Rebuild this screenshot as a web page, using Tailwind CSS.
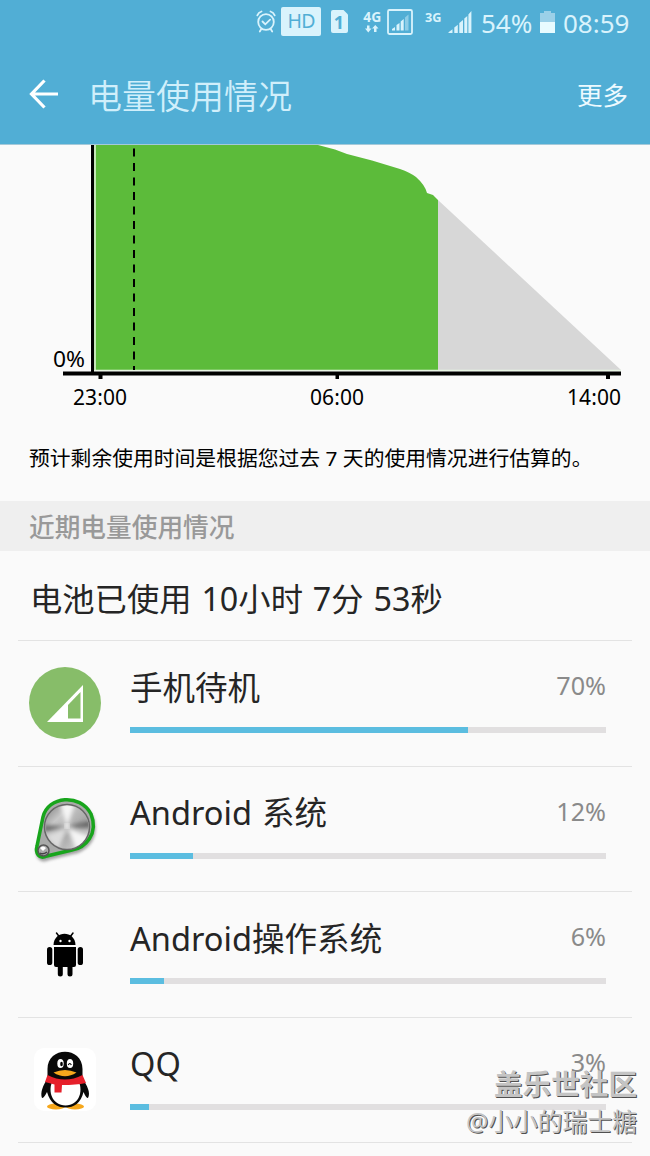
<!DOCTYPE html>
<html lang="zh-CN">
<head>
    <meta charset="UTF-8">
    <meta name="viewport" content="width=device-width, initial-scale=1.0">
    <title>电量使用情况</title>

    <!-- Styles -->
    <script src="https://cdn.jsdelivr.net/npm/@tailwindcss/browser@4"></script>
</head>
<body class="bg-[#fafafa] font-['Noto_Sans','Noto_Sans_CJK_SC',sans-serif] text-[#252525]">
<div class="relative w-[650px] h-[1156px] overflow-hidden">

    <!-- Header -->
    <header class="h-[145px] bg-[#51aed5] border-b border-[#a5c9d9] flex flex-col">
        <!-- Status bar -->
        <div class="h-[46px] flex items-center text-[#d9f3fc]">
            <svg class="w-[216px] h-[46px] ml-[256px] shrink-0" viewBox="256 0 216 46" fill="none">
                <!-- Alarm -->
                <g stroke="currentColor" stroke-width="1.8" stroke-linecap="round">
                    <circle cx="266" cy="22" r="7.8"/>
                    <path d="M262.5 21.5l2.8 2.8 4.8-4.6M257.3 15.3q1.2-3 4.2-3.8M274.7 15.3q-1.2-3-4.2-3.8M261.3 29l-1.5 2.5M270.7 29l1.5 2.5"/>
                </g>
                <!-- HD -->
                <rect x="281" y="7" width="40" height="29" rx="2" fill="currentColor"/>
                <text x="287.5" y="28.3" font-size="19.5" textLength="28" fill="#51aed5">HD</text>
                <!-- SIM 1 -->
                <path d="M333 10h10.500l4.500 4.500v16.500q0 2-2 2h-13q-2 0-2-2v-19q0-2 2-2z" fill="currentColor"/>
                <text x="333.700" y="28.500" font-size="18" font-weight="700" fill="#51aed5">1</text>
                <!-- 4G -->
                <text x="363.300" y="22" font-size="13.500" font-weight="700" textLength="18" lengthAdjust="spacingAndGlyphs" fill="currentColor">4G</text>
                <path d="M367 25.500h2.500v3h2l-3.200 4-3.300-4h2zM374 32h2.500v-3.500h2l-3.200-3.500-3.300 3.500h2z" fill="currentColor"/>
                <rect x="388" y="10" width="24" height="24" rx="1.500" stroke="currentColor" stroke-width="1.800"/>
                <path d="M392 30.500v-1.500l3-2v3.500zM396.500 30.500v-5.500l3-2v7.500zM400.700 30.500v-9l3-2.500v11.500z" fill="currentColor"/>
                <path d="M405 30.500v-13l3.500-3v16z" fill="currentColor" opacity=".45"/>
                <!-- 3G -->
                <text x="425" y="22" font-size="12.500" font-weight="700" textLength="16.500" lengthAdjust="spacingAndGlyphs" fill="currentColor">3G</text>
                <path d="M448.500 33v-.8l4-3v3.800zM454.300 33v-5.500l3.500-2.800v8.300zM459.300 33v-10l3.700-3v13zM464.300 33v-14.500l3-2.500v17zM468.400 33v-18.500l3-3.500v22z" fill="currentColor"/>
            </svg>
            <span class="ml-[9px] w-[53px] text-[26px] leading-[46px] whitespace-nowrap">54%</span>
            <svg class="w-[15px] h-[46px] ml-[6px] shrink-0" viewBox="0 0 15 46">
                <path d="M0 13h4v-2h7v2h4v9H0z" fill="#9bd0e8"/>
                <path d="M0 22h15v11H0z" fill="#e8fbff"/>
            </svg>
            <span class="ml-[8px] text-[26px] leading-[46px]">08:59</span>
        </div>
        <!-- Title bar -->
        <div class="h-[98px] flex items-center pl-[29px] pr-[22px]">
            <svg class="w-[29px] h-[30px] mb-[2px]" viewBox="0 0 29 30" fill="none" stroke="#fff" stroke-width="3.200">
                <path d="M15.500 1.500L2.500 15l13 13.500M2 15h27"/>
            </svg>
            <h1 class="ml-[30px] mt-[2px] text-[34px] leading-none font-[350] text-[#d0effb]">电量使用情况</h1>
            <button class="ml-auto mt-[2px] text-[25.5px] leading-none text-[#edfaff]">更多</button>
        </div>
    </header>

    <!-- Battery graph -->
    <svg class="block w-[650px] h-[275px]" viewBox="0 145 650 275" font-size="21" fill="#000">
        <path d="M93 145H318L335 149.500L347 154L372 160.500L400 169Q410 172.500 416 177Q425 185 427 193L433 195L438 200V370H93z" fill="#5cbb3a"/>
        <path d="M438 200L621 370H438z" fill="#d7d7d7"/>
        <path d="M95 145v225.500h526" fill="none" stroke="#e8f5e3" stroke-width="1.500"/>
        <path d="M92.500 145v228" stroke="#000" stroke-width="3"/>
        <path d="M63 373.500h558" stroke="#000" stroke-width="4"/>
        <path d="M98.500 375h4v4h-4zM335.500 375h3.500v4h-3.500zM606 375h4v4h-4z"/>
        <path d="M134 148.500v221.500" stroke="#000" stroke-width="2" stroke-dasharray="8 6.500"/>
        <text x="53" y="367" textLength="32" lengthAdjust="spacingAndGlyphs">0%</text>
        <text x="73" y="405" textLength="54">23:00</text>
        <text x="310" y="405" textLength="54">06:00</text>
        <text x="567" y="405" textLength="54">14:00</text>
    </svg>

    <p class="h-[81px] pl-[29px] pt-[22px] text-[20.8px] leading-[32px] text-black whitespace-nowrap">预计剩余使用时间是根据您过去 7 天的使用情况进行估算的。</p>

    <!-- Section title -->
    <h2 class="h-[50px] pl-[29px] bg-[#efefef] text-[25.7px] leading-[53px] font-medium text-[#999]">近期电量使用情况</h2>

    <main class="px-[18px]">
        <div class="h-[90px] pl-[12px] border-b border-[#e3e3e3] text-[32.3px] leading-[94px] [word-spacing:1.5px] whitespace-nowrap">电池已使用 10小时 7分 53秒</div>

        <!-- Phone idle -->
        <div class="h-[125.5px] border-b border-[#e3e3e3] flex pl-[11px] pr-[26px]">
            <svg class="w-[72px] h-[72px] mt-[26px] shrink-0" viewBox="0 0 72 72">
                <circle cx="36" cy="36" r="36" fill="#87bd69"/>
                <path d="M54 18v37H18z" fill="#fff"/>
                <path d="M51.500 25v26.500H39V38z" fill="#87bd69"/>
            </svg>
            <div class="flex-1 ml-[29px]">
                <div class="mt-[23px] h-[46px] flex justify-between items-center">
                    <span class="pt-[2px] text-[32.5px] leading-none">手机待机</span>
                    <span class="pb-[2px] text-[25.2px] leading-none text-[#8a8a8a]">70%</span>
                </div>
                <div class="mt-[17px] h-[6px] bg-[#e1dfe0]"><div class="h-full bg-[#5bbde0]" style="width: 71%"></div></div>
            </div>
        </div>

        <!-- Android system -->
        <div class="h-[125.5px] border-b border-[#e3e3e3] flex pl-[11px] pr-[26px]">
            <svg class="w-[72px] h-[72px] mt-[26px] shrink-0" viewBox="29 793 72 72">
                <defs>
                    <linearGradient id="metal" x1="0" y1="0" x2="1" y2="1">
                        <stop offset="0" stop-color="#777"/>
                        <stop offset=".3" stop-color="#c8c8c8"/>
                        <stop offset=".6" stop-color="#aaa"/>
                        <stop offset="1" stop-color="#e2e2e2"/>
                    </linearGradient>
                    <filter id="soft" x="-20%" y="-20%" width="140%" height="140%"><feGaussianBlur stdDeviation="1.500"/></filter>
                    <filter id="shine"><feGaussianBlur stdDeviation="2"/></filter>
                    <clipPath id="dial"><circle cx="67" cy="827" r="21.500"/></clipPath>
                </defs>
                <path d="M43 817C49 792 82 795 92 814C101 837 84 850 73 852L48 858C39 863 33 854 36 847z" fill="#666" opacity=".6" filter="url(#soft)" transform="translate(1 2)"/>
                <path d="M43 817C48 796 80 793 91 814C99 834 85 848 72 850L47 856C39 860 35 853 37 846z" fill="#a9aaa9" stroke="#18a51c" stroke-width="3.500"/>
                <circle cx="67" cy="827" r="22.500" fill="url(#metal)" stroke="#666" stroke-width="1.500"/>
                <g clip-path="url(#dial)">
                    <g filter="url(#shine)">
                        <path d="M67 827L60 803h15zM67 827L77 851h11l4-13z" fill="#f5f5f5"/>
                        <path d="M67 827L44 825v7zM67 827L91 820v8z" fill="#666"/>
                        <path d="M67 827L46 836l12 15z" fill="#ddd"/>
                    </g>
                    <circle cx="67" cy="826" r="2.500" fill="#fff" filter="url(#shine)"/>
                </g>
                <circle cx="43.500" cy="850.500" r="5.500" fill="#aaa" stroke="#555" stroke-width="1.500"/>
                <path d="M40 848q3-3 6 0l-3 3z" fill="#fff"/>
                <path d="M40 853q3 2 7-1" stroke="#444" stroke-width="1.500" fill="none"/>
            </svg>
            <div class="flex-1 ml-[29px]">
                <div class="mt-[23px] h-[46px] flex justify-between items-center">
                    <span class="pt-[2px] text-[32.6px] leading-none [word-spacing:1.5px]">Android 系统</span>
                    <span class="pb-[1px] text-[25.2px] leading-none text-[#8a8a8a]">12%</span>
                </div>
                <div class="mt-[17px] h-[6px] bg-[#e1dfe0]"><div class="h-full bg-[#5bbde0]" style="width: 13.2%"></div></div>
            </div>
        </div>

        <!-- Android OS -->
        <div class="h-[125.5px] border-b border-[#e3e3e3] flex pl-[11px] pr-[26px]">
            <svg class="w-[72px] h-[72px] mt-[26px] shrink-0" viewBox="29 918 72 72">
                <path d="M53.500 945C54 930 75 930 75.500 945z"/>
                <path d="M59.500 937l-3-4M70 937l3-4" stroke="#000" stroke-width="1.500" stroke-linecap="round"/>
                <circle cx="60.500" cy="941" r="1.200" fill="#fff"/>
                <circle cx="69.500" cy="941" r="1.200" fill="#fff"/>
                <path d="M54 947h22v18q0 2-2 2h-1.500v7a2.500 2.500 0 0 1-5 0v-7h-4.700v7a2.500 2.500 0 0 1-5 0v-7H56q-2 0-2-2z"/>
                <rect x="47" y="947" width="5.300" height="18" rx="2.600"/>
                <rect x="77.700" y="947" width="5.300" height="18" rx="2.600"/>
            </svg>
            <div class="flex-1 ml-[29px]">
                <div class="mt-[23px] h-[46px] flex justify-between items-center">
                    <span class="pt-[2px] text-[32.6px] leading-none">Android操作系统</span>
                    <span class="pb-[2px] text-[25.2px] leading-none text-[#8a8a8a]">6%</span>
                </div>
                <div class="mt-[17px] h-[6px] bg-[#e1dfe0]"><div class="h-full bg-[#5bbde0]" style="width: 7.1%"></div></div>
            </div>
        </div>

        <!-- QQ -->
        <div class="h-[125.5px] border-b border-[#e3e3e3] flex pl-[11px] pr-[26px]">
            <svg class="w-[72px] h-[72px] mt-[26px] shrink-0" viewBox="29 1044 72 72">
                <rect x="34" y="1048" width="62" height="63" rx="10" fill="#fff"/>
                <ellipse cx="56" cy="1106.500" rx="9" ry="3" fill="#f6a71c"/>
                <ellipse cx="75" cy="1106.500" rx="9" ry="3" fill="#f6a71c"/>
                <path d="M47.500 1079V1069C47.500 1046 82.500 1046 82.500 1069V1079C87 1085 91 1093 88 1098Q86 1098 83.500 1092C81 1103 74 1107.500 65.500 1107.500C57 1107.500 50 1103 47 1092Q44 1098 42 1098C40 1093 43 1085 47.500 1079z" fill="#090909"/>
                <path d="M52 1082h27c4 10 0 23-13.500 23.500C52 1105 48 1092 52 1082z" fill="#fff"/>
                <ellipse cx="60.500" cy="1063.500" rx="3.200" ry="4.500" fill="#fff"/>
                <ellipse cx="70" cy="1063.500" rx="3.200" ry="4.500" fill="#fff"/>
                <ellipse cx="61.500" cy="1064" rx="1.300" ry="2.200"/>
                <path d="M68.300 1065q1.500-3 3 0" stroke="#000" stroke-width="1.200" fill="none"/>
                <path d="M53.500 1072.500Q65 1067.500 76.500 1072.500Q65 1080 53.500 1072.500z" fill="#f6a71c"/>
                <path d="M47.500 1075Q65 1084 82.500 1075L86 1083Q76 1085 62 1085L61.500 1092.500H54.500V1084.500L45 1082z" fill="#e6202b"/>
            </svg>
            <div class="flex-1 ml-[29px]">
                <div class="mt-[23px] h-[46px] flex justify-between items-center">
                    <span class="pt-[2px] text-[32.5px] leading-none">QQ</span>
                    <span class="pb-[1px] text-[25.2px] leading-none text-[#8a8a8a]">3%</span>
                </div>
                <div class="mt-[17px] h-[6px] bg-[#e1dfe0]"><div class="h-full bg-[#5bbde0]" style="width: 4%"></div></div>
            </div>
        </div>
    </main>

    <!-- Community watermark -->
    <div class="absolute right-[13px] bottom-[18px] text-right whitespace-nowrap text-[#c4c4c4] [text-shadow:1px_1px_0_#505050]">
        <div class="text-[28.6px] leading-[40px] font-bold">盖乐世社区</div>
        <div class="text-[24.8px] leading-[34px]">@小小的瑞士糖</div>
    </div>
</div>
</body>
</html>
